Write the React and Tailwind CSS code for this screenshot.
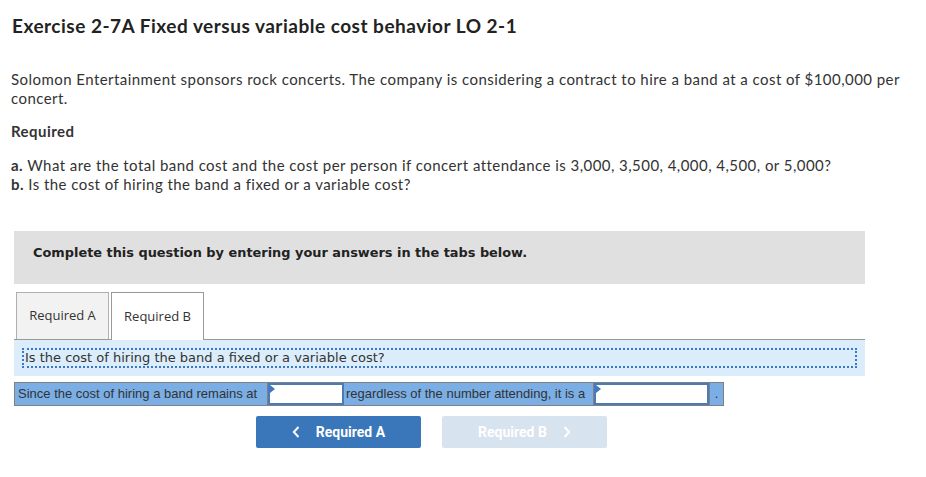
import React from "react";

export default function App() {
  return (
    <div className="w-[926px] h-[477px] bg-white text-[#333] overflow-hidden" style={{ fontFamily: "Lato, 'Open Sans', sans-serif" }}>
      <div className="pt-[14px] pl-[12px]">
        <h1 className="text-[19px] font-bold leading-[24px] tracking-[0.5px] text-[#222]">Exercise 2-7A Fixed versus variable cost behavior LO 2-1</h1>
      </div>
      <div className="pl-[11px] pr-[20px] mt-[32px] text-[15px] leading-[19px] tracking-[0.45px] text-[#333]">
        <p>Solomon Entertainment sponsors rock concerts. The company is considering a contract to hire a band at a cost of $100,000 per concert.</p>
        <p className="mt-[14px] font-bold">Required</p>
        <p className="mt-[15px]"><b>a.</b> What are the total band cost and the cost per person if concert attendance is 3,000, 3,500, 4,000, 4,500, or 5,000?</p>
        <p><b>b.</b> Is the cost of hiring the band a fixed or a variable cost?</p>
      </div>
      <div className="ml-[14px] w-[851px] mt-[37px]">
        <div className="h-[53px] bg-[#e0e0e0] pt-[14px] pl-[19px]">
          <span className="block text-[12.9px] leading-[16px] font-bold text-[#222]" style={{ fontFamily: "'DejaVu Sans', Verdana, sans-serif" }}>Complete this question by entering your answers in the tabs below.</span>
        </div>
        <div className="mt-[8px] flex items-end h-[48px] border-b border-[#999]" style={{ fontFamily: "'Open Sans', sans-serif" }}>
          <div className="ml-[2px] w-[93px] h-[47px] bg-[#f2f2f2] border border-[#b0b0b0] border-b-0 flex items-center justify-center text-[13px] text-[#333]">Required A</div>
          <div className="ml-[2px] w-[93px] h-[48px] bg-white border border-[#999] border-b-0 -mb-px flex items-center justify-center text-[13px] text-[#333]">Required B</div>
        </div>
        <div className="h-[36px] bg-[#dbedfb] pt-[8px] px-[8px]">
          <div className="h-[20px] border-2 border-dotted border-[#3c78c8] flex items-center pl-[1px] text-[13px] text-[#333]" style={{ fontFamily: "'DejaVu Sans', Verdana, sans-serif" }}>
            Is the cost of hiring the band a fixed or a variable cost?
          </div>
        </div>
        <div className="mt-[6px] flex h-[24px] w-[710px] border border-[#808080] bg-[#7aaee4] text-[13px] text-[#333]" style={{ fontFamily: "'Liberation Sans', Arial, sans-serif" }}>
          <div className="w-[253px] flex items-center pl-[3px] border-r border-[#808080] whitespace-nowrap">Since the cost of hiring a band remains at</div>
          <div className="relative w-[76px] bg-white border-2 border-[#4a7ab8]">
            <span className="absolute left-0 top-0 w-0 h-0 border-t-[4px] border-b-[4px] border-l-[5px] border-t-transparent border-b-transparent border-l-[#3c78c8]"></span>
          </div>
          <div className="w-[250px] flex items-center pl-[2px] border-r border-[#808080] whitespace-nowrap">regardless of the number attending, it is a</div>
          <div className="relative w-[115px] bg-white border-2 border-[#4a7ab8]">
            <span className="absolute left-0 top-0 w-0 h-0 border-t-[4px] border-b-[4px] border-l-[5px] border-t-transparent border-b-transparent border-l-[#3c78c8]"></span>
          </div>
          <div className="flex-1 flex items-center justify-center border-l border-[#808080]">.</div>
        </div>
        <div className="mt-[10px] flex pl-[242px] gap-[21px]" style={{ fontFamily: "Roboto, sans-serif" }}>
          <div className="w-[165px] h-[32px] bg-[#3a76ba] rounded-[2px] flex items-center justify-center gap-[16px] text-white text-[14px] font-bold">
            <svg width="8" height="12" viewBox="0 0 8 12"><path d="M6.5 1 L1.8 6 L6.5 11" stroke="white" strokeWidth="2" fill="none" /></svg>
            <span>Required A</span>
          </div>
          <div className="w-[165px] h-[32px] bg-[#d8e3f0] rounded-[2px] flex items-center justify-center gap-[16px] text-white text-[14px] font-bold">
            <span>Required B</span>
            <svg width="8" height="12" viewBox="0 0 8 12"><path d="M1.5 1 L6.2 6 L1.5 11" stroke="white" strokeWidth="2" fill="none" /></svg>
          </div>
        </div>
      </div>
    </div>
  );
}
